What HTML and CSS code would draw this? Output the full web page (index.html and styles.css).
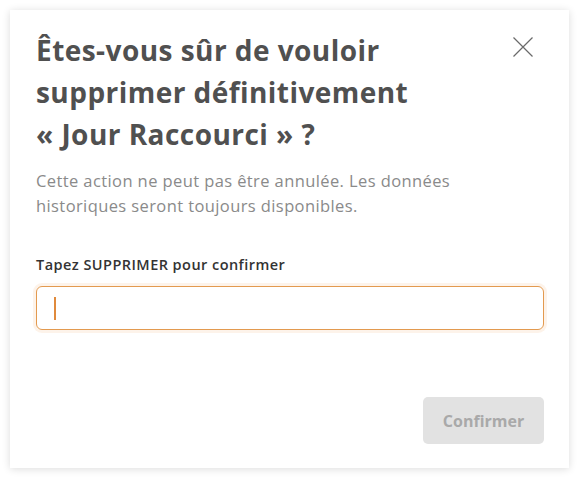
FILE: index.html
```html
<!DOCTYPE html>
<html lang="fr">
<head>
<meta charset="utf-8">
<link rel="stylesheet" href="styles.css">
</head>
<body>
<div class="dialog">
  <div class="header">
    <h1 class="title">Êtes-vous sûr de vouloir supprimer définitivement «&nbsp;Jour Raccourci&nbsp;»&nbsp;?</h1>
    <button class="close" aria-label="Fermer">
      <svg width="20" height="20" viewBox="0 0 20 20"><path d="M0.5 0.5 L19.5 19.5 M19.5 0.5 L0.5 19.5" stroke="#6a6a6a" stroke-width="1.2" fill="none"/></svg>
    </button>
  </div>
  <p class="desc">Cette action ne peut pas être annulée. Les données historiques seront toujours disponibles.</p>
  <label class="label">Tapez SUPPRIMER pour confirmer</label>
  <div class="input"><span class="caret"></span></div>
  <div class="footer">
    <button class="confirm">Confirmer</button>
  </div>
</div>
</body>
</html>
```
FILE: styles.css
```css
html, body { margin: 0; padding: 0; background: #fff; }
body { padding: 10px; font-family: "Open Sans", sans-serif; }
.dialog {
  width: 559px;
  height: 458px;
  box-sizing: border-box;
  background: #fff;
  box-shadow: 0 1px 8px rgba(0,0,0,0.14);
  padding: 19px 25px 24px 26px;
  display: flex;
  flex-direction: column;
}
.header { display: flex; justify-content: space-between; align-items: flex-start; }
.title {
  margin: 0;
  width: 440px;
  font-size: 28px;
  line-height: 42px;
  font-weight: 700;
  letter-spacing: 0.45px;
  color: #505050;
}
.close {
  border: 0; background: none; padding: 0; margin: 8px 11px 0 0;
  width: 20px; height: 20px; display: block;
}
.close svg { display: block; }
.desc {
  margin: 13px 0 0 0;
  font-size: 16.5px;
  line-height: 25px;
  letter-spacing: 0.4px;
  color: #8a8a8a;
  width: 470px;
}
.label {
  display: block;
  margin-top: 37px;
  font-size: 14.5px;
  font-weight: 600;
  letter-spacing: 0.45px;
  color: #333;
  line-height: 20px;
}
.input {
  margin-top: 11px;
  height: 44px;
  box-sizing: border-box;
  border: 1px solid #e39a4f;
  border-radius: 6px;
  box-shadow: 0 0 0 3px rgba(240,160,80,0.12);
  padding: 10px 17px;
  display: flex;
  align-items: center;
}
.caret { width: 2px; height: 23px; background: #e08a3c; }
.footer { margin-top: auto; display: flex; justify-content: flex-end; }
.confirm {
  width: 121px; height: 47px;
  border: 0; border-radius: 5px;
  background: #e2e2e2;
  color: #a9a9a9;
  font-family: inherit;
  font-size: 16px;
  font-weight: 700;
}
```
